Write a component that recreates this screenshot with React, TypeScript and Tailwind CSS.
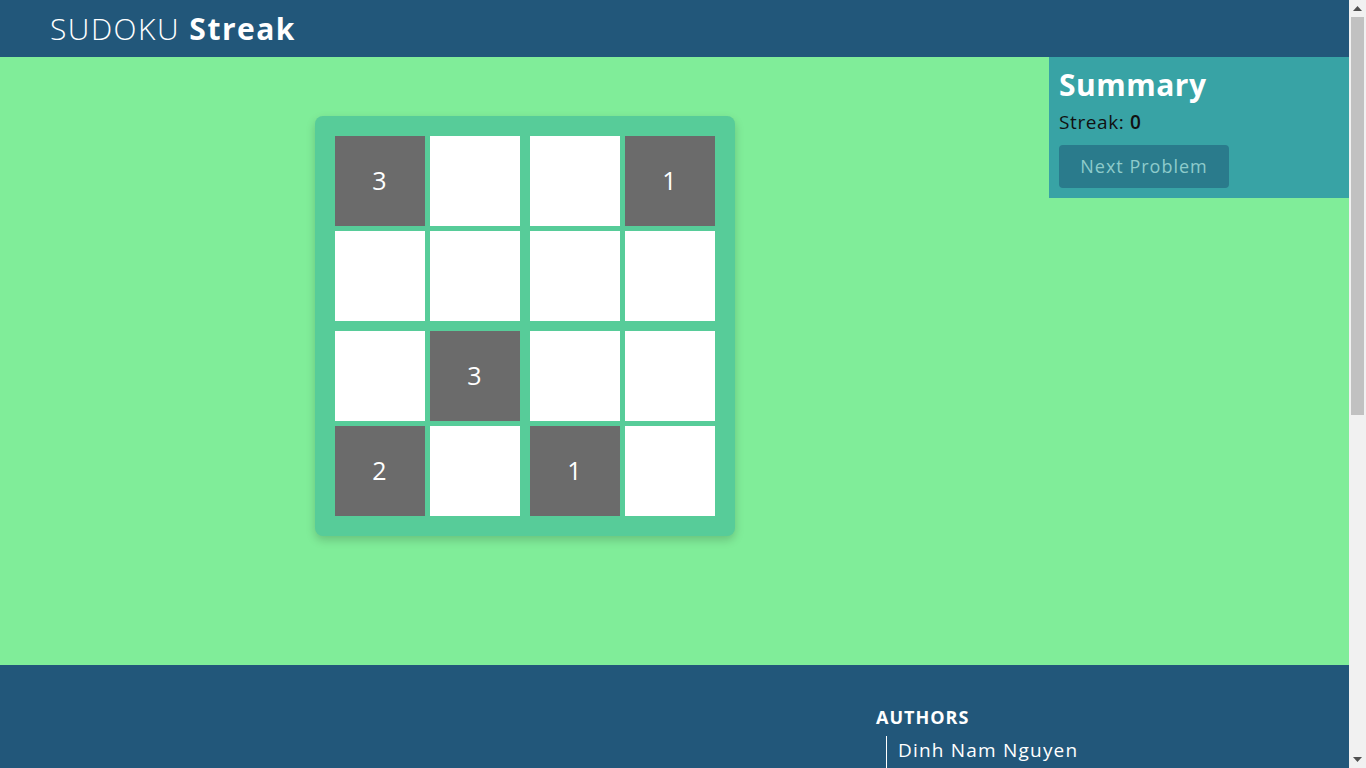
import React from 'react';

type Cell = { value: number | null; given: boolean };

const g = (v: number): Cell => ({ value: v, given: true });
const e = (): Cell => ({ value: null, given: false });

// board split into 2x2 boxes, each box holds 2x2 cells
const BOXES: Cell[][] = [
  [g(3), e(), e(), e()],
  [e(), g(1), e(), e()],
  [e(), g(3), g(2), e()],
  [e(), e(), g(1), e()],
];

const AUTHORS = ['Dinh Nam Nguyen', 'Thi Mai Tran', 'Van Hoang Le'];

function Board() {
  return (
    <div className="rounded-lg bg-[#57cc99] p-5 shadow-[0_4px_10px_rgba(0,0,0,0.18)]">
      <div className="grid grid-cols-[185px_185px] gap-[10px]">
        {BOXES.map((box, bi) => (
          <div key={bi} className="grid grid-cols-[90px_90px] gap-[5px]">
            {box.map((c, ci) => (
              <div
                key={ci}
                className={
                  c.given
                    ? 'flex h-[90px] w-[90px] items-center justify-center bg-[#6b6b6b] text-[25px] text-white'
                    : 'flex h-[90px] w-[90px] items-center justify-center bg-white text-[25px] text-gray-800'
                }
              >
                {c.value}
              </div>
            ))}
          </div>
        ))}
      </div>
    </div>
  );
}

// mimics the browser's page scrollbar seen in the screenshot
function ScrollBar() {
  return (
    <div className="flex h-screen w-[17px] flex-col bg-[#f1f1f1]">
      <div className="flex h-[17px] items-center justify-center">
        <svg width="9" height="5" viewBox="0 0 9 5"><path d="M0 5 L4.5 0 L9 5 Z" fill="#505050" /></svg>
      </div>
      <div className="mx-[2px] h-[398px] bg-[#c1c1c1]" />
      <div className="flex-1" />
      <div className="flex h-[17px] items-center justify-center">
        <svg width="9" height="5" viewBox="0 0 9 5"><path d="M0 0 L9 0 L4.5 5 Z" fill="#505050" /></svg>
      </div>
    </div>
  );
}

export default function App() {
  return (
    <div className="flex h-screen overflow-hidden font-['Open_Sans',sans-serif]">
      <div className="h-screen flex-1 overflow-hidden">
        <header className="flex h-[57px] items-center bg-[#22577a] px-[50px]">
          <h1 className="text-[30px] tracking-[1.5px] text-white">
            <span className="font-light">SUDOKU</span> <span className="font-bold">Streak</span>
          </h1>
        </header>

        <main className="flex h-[608px] bg-[#80ed99]">
          <div className="flex flex-1 justify-center pt-[59px]">
            <div>
              <Board />
            </div>
          </div>
          <aside className="h-[141px] w-[300px] bg-[#38a3a5] px-[10px] pt-[9px]">
            <h2 className="text-[30px] leading-[38px] font-bold tracking-[0.5px] text-white">Summary</h2>
            <p className="mt-[6px] text-[19px] leading-[24px] tracking-[0.6px] text-[#111]">
              Streak: <span className="font-semibold">0</span>
            </p>
            <button className="mt-[11px] h-[43px] w-[170px] rounded-sm bg-[#2a7b8c] text-[18px] tracking-[1px] text-[#8ecbcb]">
              Next Problem
            </button>
          </aside>
        </main>

        <footer className="grid min-h-[750px] grid-cols-[876px_1fr] bg-[#22577a] pt-[40px] text-white">
          <div />
          <div>
            <h3 className="text-[18px] leading-[24px] font-bold tracking-[1px]">AUTHORS</h3>
            <ul className="mt-[7px] ml-[10px] border-l border-white pl-[11px]">
              {AUTHORS.map(a => (
                <li key={a} className="py-[1px] text-[19px] leading-[26px] tracking-[1.2px]">{a}</li>
              ))}
            </ul>
          </div>
        </footer>
      </div>
      <ScrollBar />
    </div>
  );
}
